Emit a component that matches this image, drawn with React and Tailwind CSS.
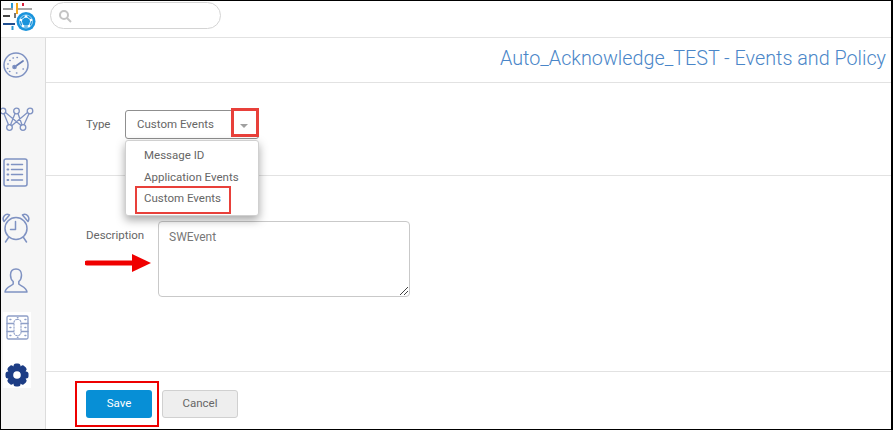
import React from "react";

const ic = { fill: "none", stroke: "#7f92c2", strokeWidth: 1.5, strokeLinecap: "round", strokeLinejoin: "round" };

function Logo() {
  return (
    <svg width="36" height="32" viewBox="1 1 36 32" className="block">
      <g strokeWidth="2">
        <path d="M12 3v7" stroke="#2b9ad6" />
        <path d="M17 3v11" stroke="#f5a81c" />
        <path d="M23 3v3" stroke="#d8233f" />
        <path d="M18 9h14" stroke="#a9a9a9" />
        <path d="M3 9h10" stroke="#9a9a9a" />
        <path d="M3 16h7" stroke="#444" />
        <path d="M15 13v5" stroke="#777" />
        <path d="M3 24h12" stroke="#1f4f91" />
        <path d="M12.500 26v4" stroke="#2b9ad6" />
      </g>
      <circle cx="26" cy="21.500" r="9.500" fill="#1a94dc" />
      <circle cx="26" cy="21.500" r="6.500" fill="none" stroke="#bfe3f7" strokeWidth=".8" />
      <g fill="#fff">
        <circle cx="26" cy="16.500" r="1.300" />
        <circle cx="31" cy="20" r="1.300" />
        <circle cx="29" cy="26" r="1.300" />
        <circle cx="23" cy="26" r="1.300" />
        <circle cx="21" cy="20" r="1.300" />
      </g>
      <path d="M26 16.500l5 3.500-2 6h-6l-2-6z" fill="none" stroke="#fff" strokeWidth=".8" />
    </svg>
  );
}

function Gauge() {
  return (
    <svg width="26" height="26" viewBox="0 0 26 26" {...ic} className="block">
      <circle cx="13" cy="13" r="12" />
      <path d="M11.500 15L20 9" strokeWidth="1.800" stroke="#6a7fb5" />
      <circle cx="11.500" cy="15" r="1.600" fill="#6a7fb5" />
      <path d="M4.500 16.500h.4M4.800 12h.4M6.800 8.500h.4M10 6h.4M14 5.500h.4M6.500 19.500h.4M20 17h.4M13.500 21h.4" strokeWidth="1.500" />
    </svg>
  );
}

function Network() {
  return (
    <svg width="34" height="24" viewBox="0 0 34 24" {...ic} strokeWidth="1.300" className="block">
      <circle cx="3" cy="4" r="2.800" />
      <circle cx="16.500" cy="4" r="2.800" />
      <circle cx="30" cy="4" r="2.800" />
      <circle cx="9.500" cy="20.500" r="2.800" />
      <circle cx="23" cy="20.500" r="2.800" />
      <path d="M4 6.700l4.500 11M5.500 5.500l15.500 13M15 6.500L10.500 18M18 6.500l4 11.500M27.500 5.500L12 18.500M29 6.700l-5 11" />
    </svg>
  );
}

function ListIcon() {
  return (
    <svg width="25" height="29" viewBox="0 0 25 29" {...ic} className="block">
      <rect x="1" y="1" width="23" height="27" rx="2" />
      <path d="M8.500 6.500h11M8.500 11.500h11M8.500 16.500h11M8.500 22h11" strokeWidth="1.500" />
      <path d="M4.500 6.500h.8M4.500 11.500h.8M4.500 16.500h.8M4.500 22h.8" strokeWidth="2" />
    </svg>
  );
}

function Alarm() {
  return (
    <svg width="28" height="31" viewBox="0 0 28 31" {...ic} className="block">
      <circle cx="14" cy="16.500" r="11" />
      <path d="M13.500 9.500v8H8.500" />
      <path d="M2 9.500C-.5 5.500 3.500.5 7.500 3zM26 9.500C28.500 5.500 24.500.5 20.500 3z" />
      <path d="M6.500 25.500l-3 4.500M21.500 25.500l3 4.500" />
    </svg>
  );
}

function User() {
  return (
    <svg width="24" height="25" viewBox="0 0 24 25" {...ic} className="block">
      <path d="M12 1c-3.700 0-5.500 2.700-5.500 6 0 3 1 5.200 2.700 6.500v2.500C7.500 18 1.500 19 1 24h22c-.5-5-6.500-6-8.200-8v-2.500C16.500 12.200 17.500 10 17.500 7c0-3.300-1.800-6-5.500-6z" />
    </svg>
  );
}

function Board() {
  return (
    <svg width="23" height="25" viewBox="0 0 23 25" {...ic} strokeWidth="1.300" stroke="#8f9fc7" className="block">
      <rect x="1" y="1" width="21" height="23" rx="1.500" />
      <path d="M1 8.500h6.500M15.500 8.500H22M1 16.500h6.500M15.500 16.500H22" />
      <rect x="8" y="4.500" width="7" height="16" rx="3" strokeDasharray="1.500 1.500" strokeWidth="1.100" />
      <path d="M4 4.500h.8M11.500 2.800h.4M19 4.500h.8M4 12.500h.8M19 12.500h.8M4 20.500h.8M11.500 22.300h.4M19 20.500h.8" strokeWidth="1.600" />
    </svg>
  );
}

function Gear() {
  const teeth = [0, 45, 90, 135, 180, 225, 270, 315];
  return (
    <svg width="24" height="24" viewBox="0 0 24 24" className="block">
      {teeth.map((a) => (
        <rect key={a} x="8.500" y="0.500" width="7" height="6" rx="2.500" fill="#1d3d85" transform={`rotate(${a} 12 12)`} />
      ))}
      <circle cx="12" cy="12" r="9.300" fill="#1d3d85" />
      <circle cx="12" cy="12" r="3.800" fill="#ffffff" />
    </svg>
  );
}

export default function App() {
  return (
    <div
      className="relative flex h-[430px] w-[893px] flex-col overflow-hidden border-t border-r-2 border-b border-l border-black bg-white text-[11.500px] text-[#666]"
      style={{ fontFamily: "Roboto, 'Liberation Sans', sans-serif" }}
    >
      <header className="flex h-[37px] shrink-0 items-start border-b border-[#e2e2e2]">
        <Logo />
        <div className="ml-[13px] mt-px flex h-[27px] w-[171px] items-center rounded-full border border-[#d4d4d4] pl-[7px]">
          <svg width="14" height="14" viewBox="0 0 14 14" fill="none" stroke="#c4c4c4" strokeWidth="2">
            <circle cx="6" cy="6" r="4" />
            <path d="M9 9l4 4" />
          </svg>
        </div>
      </header>

      <div className="flex min-h-0 flex-1">
        <aside className="flex w-[45px] shrink-0 flex-col items-start border-r border-[#dcdcdc] bg-[#f6f6f6]">
          <div className="ml-[2px] mt-[14px]"><Gauge /></div>
          <div className="-ml-px mt-[29px]"><Network /></div>
          <div className="ml-[2px] mt-[27px]"><ListIcon /></div>
          <div className="ml-px mt-[25px]"><Alarm /></div>
          <div className="ml-[3px] mt-[25px]"><User /></div>
          <div className="ml-[2px] mt-[19px] flex h-[76px] w-[28px] flex-col items-center bg-white pt-[3px]">
            <Board />
            <div className="mt-[23px]"><Gear /></div>
          </div>
        </aside>

        <main className="flex min-w-0 flex-1 flex-col">
          <div className="flex h-[45px] shrink-0 items-center justify-end border-b border-[#e2e2e2] pb-[2px] pr-[5px] text-[19.750px] font-light text-[#4a86c8]">
            Auto_Acknowledge_TEST - Events and Policy
          </div>

          <div className="relative flex h-[93px] shrink-0 border-b border-[#e2e2e2] pl-[40px] pt-[27px]">
            <span className="w-[39px] pt-[6px]">Type</span>
            <div className="flex h-[29px] w-[134px] items-center justify-between rounded-[3px] border border-[#8f8f8f] pl-[11px] pr-[10px]">
              <span>Custom Events</span>
              <span className="mt-[2px] h-0 w-0 border-x-[4px] border-t-[4px] border-x-transparent border-t-[#a0a0a0]" />
            </div>

            <div className="absolute left-[79px] top-[57px] z-10 flex h-[76px] w-[134px] flex-col rounded-[3px] border border-[#d0d0d0] bg-white pl-[18px] pt-[4px] shadow-[0_4px_10px_rgba(0,0,0,0.35)]">
              <span className="leading-[21.500px]">Message ID</span>
              <span className="leading-[21.500px]">Application Events</span>
              <span className="leading-[21.500px]">Custom Events</span>
            </div>
            <div className="absolute left-[89px] top-[103px] z-20 h-[28px] w-[96px] border-2 border-[#e8403a]" />
            <div className="absolute left-[185px] top-[25px] z-20 h-[29px] w-[28px] border-[3px] border-[#e8403a]" />
          </div>

          <div className="flex h-[196px] shrink-0 border-b border-[#e2e2e2] pl-[40px] pt-[45px]">
            <span className="w-[72px] pt-[6px]">Description</span>
            <div className="relative h-[76px] w-[252px] rounded-[4px] border border-[#c9c9c9] pl-[10px] pt-[6px] text-[12px] text-[#777]">
              SWEvent
              <svg className="absolute bottom-0 right-0" width="10" height="10" viewBox="0 0 10 10" stroke="#444" strokeWidth="1">
                <path d="M1 9l8-8M5 9l4-4" />
              </svg>
            </div>
          </div>

          <div className="relative flex flex-1 items-start gap-[10px] pl-[40px] pt-[18px]">
            <button className="h-[28px] w-[66px] rounded-[3px] bg-[#078fd6] text-[11.500px] text-white">Save</button>
            <button className="h-[28px] w-[76px] rounded-[3px] border border-[#d0d0d0] bg-[#eeeeee] text-[11.500px] text-[#666]">Cancel</button>
            <div className="absolute left-[29px] top-[9px] h-[46px] w-[84px] border-2 border-[#ee0000]" />
          </div>
        </main>
      </div>

      <svg className="absolute left-[84px] top-[252px] z-20" width="68" height="20" viewBox="0 0 68 20">
        <path d="M2 10h46" stroke="#f00000" strokeWidth="5" strokeLinecap="round" />
        <path d="M47 1l19 9-19 9z" fill="#f00000" />
      </svg>
    </div>
  );
}
